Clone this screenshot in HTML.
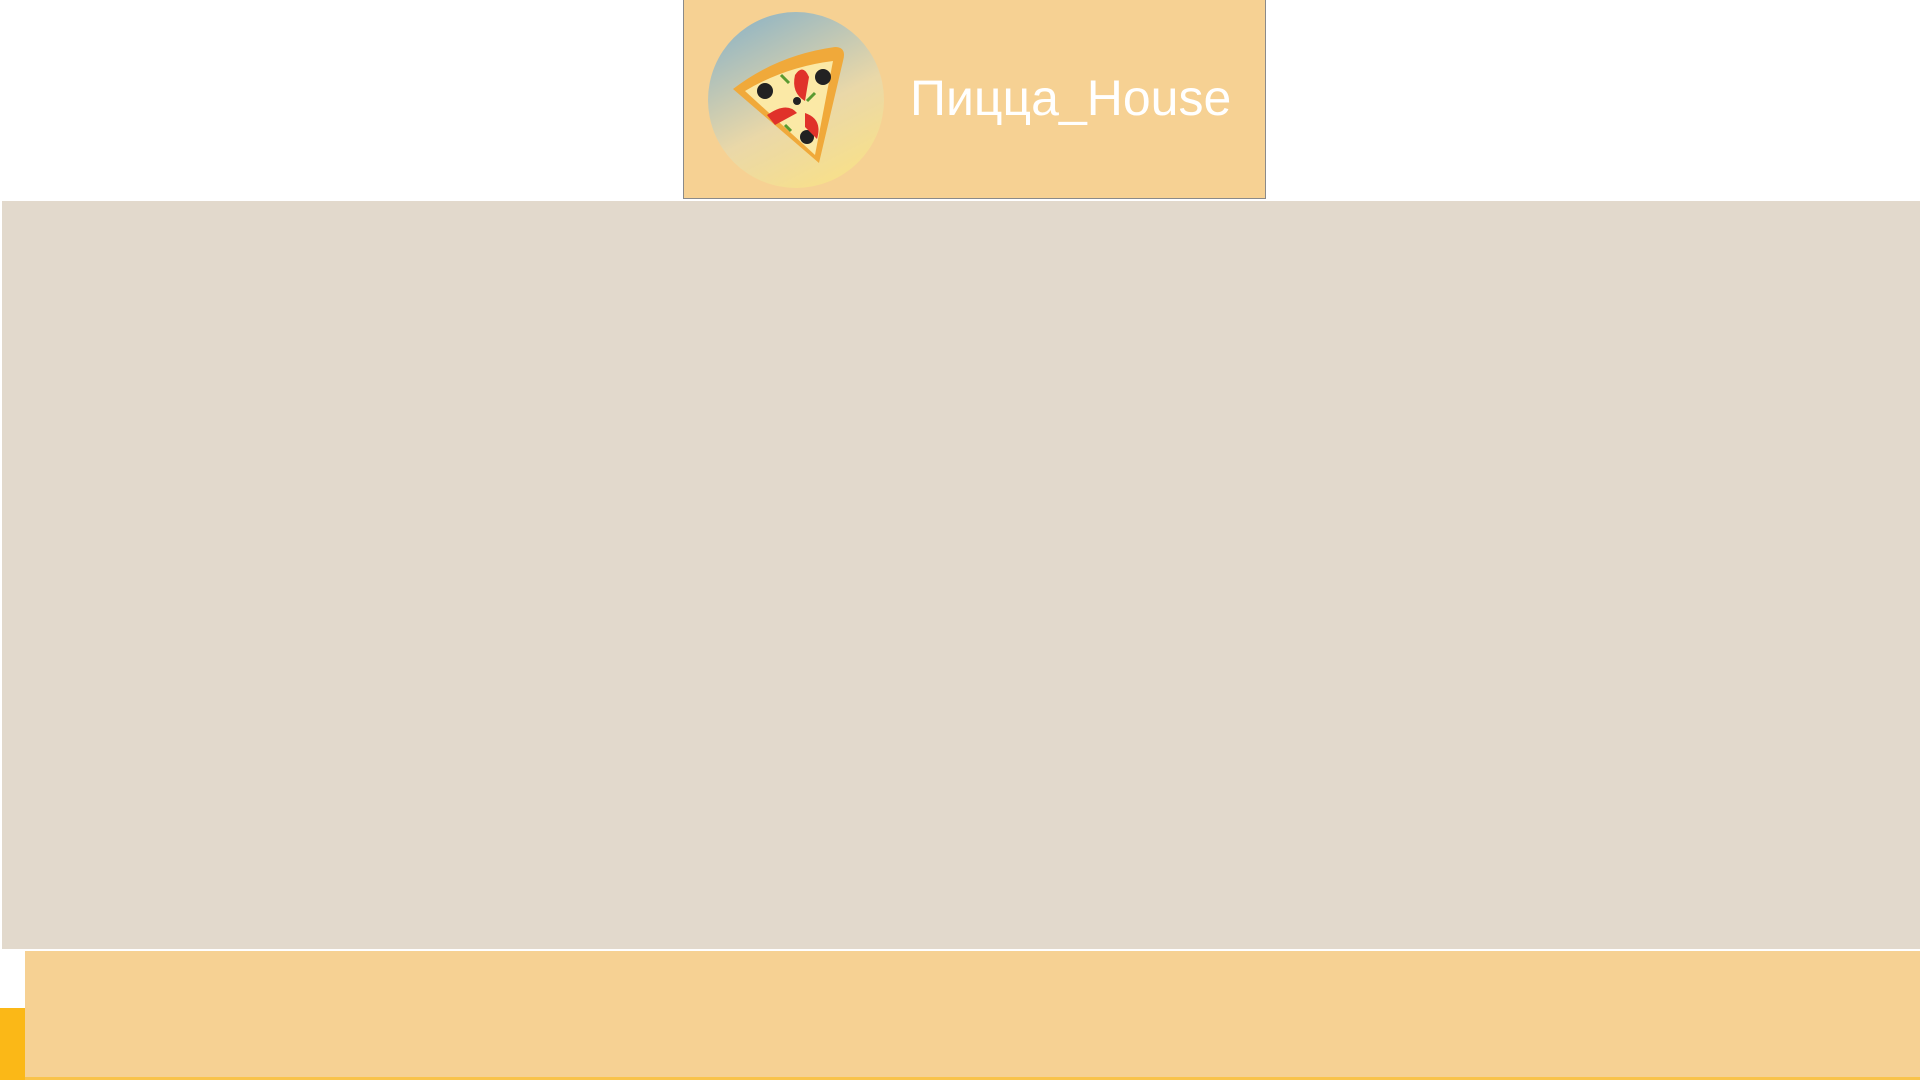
<!DOCTYPE html>
<html><head><meta charset="utf-8"><style>
html,body{margin:0;padding:0;width:1920px;height:1080px;overflow:hidden;background:#fff;position:relative}
.hdr{position:absolute;left:683px;top:0;width:583px;height:199px;background:#f6d193;border:1px solid #8a8a8a;border-top:none;box-sizing:border-box}
.title{position:absolute;left:910px;top:69px;font-family:"Liberation Sans",sans-serif;font-size:50px;color:#fff;white-space:nowrap}
.tex{position:absolute;left:2px;top:201px;width:1918px;height:748px;background:#e2d9cc}
.bot{position:absolute;left:25px;top:951px;width:1895px;height:129px;background:#f6d193;border-bottom:3px solid #f9c34a;box-sizing:border-box}
.yel{position:absolute;left:0;top:1008px;width:25px;height:72px;background:#fbb817}
</style></head><body>
<div class="hdr"></div>
<svg style="position:absolute;left:707px;top:11px" width="178" height="178" viewBox="0 0 178 178">
<defs><linearGradient id="g" x1="0.2" y1="0" x2="0.7" y2="1"><stop offset="0" stop-color="#8fb4c4"/><stop offset="0.6" stop-color="#ead8a8"/><stop offset="1" stop-color="#f8e08a"/></linearGradient></defs>
<ellipse cx="89" cy="89" rx="88" ry="88" fill="url(#g)"/>
<path d="M26 78 Q70 44 128 36 Q140 36 136 50 L112 152 Z" fill="#f0a93a"/>
<path d="M38 80 Q78 56 126 50 L108 144 Z" fill="#fbe9a6"/>
<circle cx="58" cy="80" r="8" fill="#222"/><circle cx="116" cy="66" r="8" fill="#222"/>
<circle cx="90" cy="90" r="4" fill="#222"/><circle cx="100" cy="126" r="7" fill="#222"/>
<path d="M88 64 Q96 52 102 66 L98 90 Q84 82 88 64Z" fill="#e0322a"/>
<path d="M60 104 Q80 90 90 102 L68 114Z" fill="#e0322a"/>
<path d="M98 102 Q116 108 110 128 L98 116Z" fill="#e0322a"/>
<path d="M74 64 l8 8 M108 82 l-8 8 M78 114 l6 6" stroke="#5a9a30" stroke-width="3"/>
</svg>
<div class="title">Пицца_House</div>
<div class="tex"></div>
<div class="bot"></div>
<div class="yel"></div>
</body></html>
